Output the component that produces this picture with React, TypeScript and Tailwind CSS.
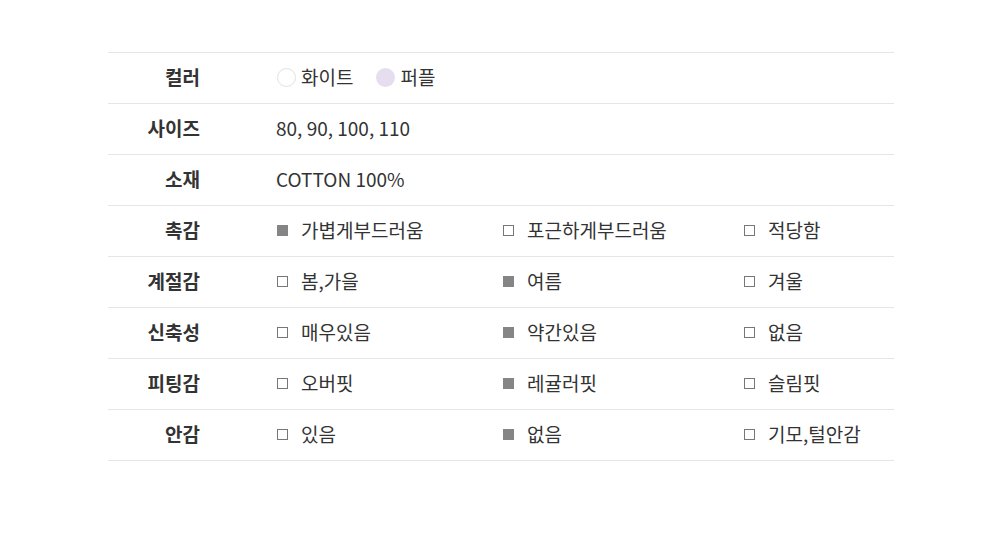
const font = { fontFamily: '"Noto Sans CJK KR", "Noto Sans", sans-serif' };

type Opt = { label: string; checked: boolean };

const rows: { title: string; options: Opt[] }[] = [
  {
    title: '촉감',
    options: [
      { label: '가볍게부드러움', checked: true },
      { label: '포근하게부드러움', checked: false },
      { label: '적당함', checked: false },
    ],
  },
  {
    title: '계절감',
    options: [
      { label: '봄,가을', checked: false },
      { label: '여름', checked: true },
      { label: '겨울', checked: false },
    ],
  },
  {
    title: '신축성',
    options: [
      { label: '매우있음', checked: false },
      { label: '약간있음', checked: true },
      { label: '없음', checked: false },
    ],
  },
  {
    title: '피팅감',
    options: [
      { label: '오버핏', checked: false },
      { label: '레귤러핏', checked: true },
      { label: '슬림핏', checked: false },
    ],
  },
  {
    title: '안감',
    options: [
      { label: '있음', checked: false },
      { label: '없음', checked: true },
      { label: '기모,털안감', checked: false },
    ],
  },
];

const colWidths = ['w-[226px]', 'w-[241px]', 'w-[150px]'];

function Row({ title, children }: { title: string; children: React.ReactNode }) {
  return (
    <div className="flex items-center h-[51px] border-b border-[#e6e6e6]">
      <div className="w-[92px] text-right text-[19px] leading-[24px] font-bold text-[#333] -mt-[3px]">{title}</div>
      <div className="pl-[76px] flex items-center text-[19px] leading-[24px] text-[#333] -mt-[3px]">{children}</div>
    </div>
  );
}

function Box({ checked }: { checked: boolean }) {
  return checked ? (
    <span className="inline-block w-[11px] h-[11px] bg-[#858585]" />
  ) : (
    <span className="inline-block w-[11px] h-[11px] border border-[#777] bg-white" />
  );
}

export default function App() {
  return (
    <div className="w-[1000px] h-[536px] bg-white pt-[52px]" style={font}>
      <div className="ml-[108px] mr-[106px] border-t border-[#e6e6e6]">
        <Row title="컬러">
          <div className="flex items-center">
            <span className="w-[19px] h-[19px] rounded-full border border-[#e2e2e2] bg-white ml-[1px] mt-[2px]" />
            <span className="ml-[5px]">화이트</span>
            <span className="w-[19px] h-[19px] rounded-full bg-[#e6deee] ml-[23px] mt-[2px]" />
            <span className="ml-[5px]">퍼플</span>
          </div>
        </Row>
        <Row title="사이즈">80, 90, 100, 110</Row>
        <Row title="소재">COTTON 100%</Row>
        {rows.map((r) => (
          <Row key={r.title} title={r.title}>
            {r.options.map((o, i) => (
              <div key={o.label} className={`flex items-center ${colWidths[i]}`}>
                <span className="ml-[1px] mt-[2px] flex items-center">
                  <Box checked={o.checked} />
                </span>
                <span className="ml-[13px]">{o.label}</span>
              </div>
            ))}
          </Row>
        ))}
      </div>
    </div>
  );
}
